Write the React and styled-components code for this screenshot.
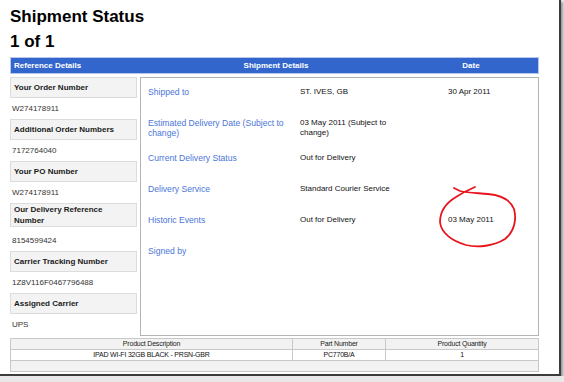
import React from 'react'
import styled, { createGlobalStyle } from 'styled-components'

const GlobalStyle = createGlobalStyle`
  html, body {
    margin: 0;
    padding: 0;
    background: #e8e8e8;
  }
  body {
    font-family: "Liberation Sans", Arial, sans-serif;
  }
`

const references = [
  { label: 'Your Order Number', value: 'W274178911' },
  { label: 'Additional Order Numbers', value: '7172764040' },
  { label: 'Your PO Number', value: 'W274178911' },
  { label: 'Our Delivery Reference Number', value: '8154599424', tall: true },
  { label: 'Carrier Tracking Number', value: '1Z8V116F0467796488' },
  { label: 'Assigned Carrier', value: 'UPS' },
]

const details = [
  { label: 'Shipped to', value: 'ST. IVES, GB', date: '30 Apr 2011' },
  { label: 'Estimated Delivery Date (Subject to change)', value: '03 May 2011 (Subject to change)', tall: true },
  { label: 'Current Delivery Status', value: 'Out for Delivery' },
  { label: 'Delivery Service', value: 'Standard Courier Service' },
  { label: 'Historic Events', value: 'Out for Delivery', date: '03 May 2011' },
  { label: 'Signed by' },
]

const App = () => {
  return (
    <>
      <GlobalStyle />
      <Page>
        <Title>Shipment Status</Title>
        <Title>1 of 1</Title>
        <HeaderBar>
          <HeadCell>Reference Details</HeadCell>
          <HeadCell center>Shipment Details</HeadCell>
          <HeadCell center last>Date</HeadCell>
        </HeaderBar>
        <Body>
          <RefColumn>
            {references.map(r => (
              <RefItem key={r.label}>
                <RefLabel tall={r.tall}>{r.label}</RefLabel>
                <RefValue tall={r.tall}>{r.value}</RefValue>
              </RefItem>
            ))}
          </RefColumn>
          <DetailPanel>
            {details.map(d => (
              <DetailRow key={d.label} tall={d.tall}>
                <DetailLabel>{d.label}</DetailLabel>
                <DetailValue>{d.value}</DetailValue>
                <DetailDate>{d.date}</DetailDate>
              </DetailRow>
            ))}
          </DetailPanel>
        </Body>
        <Products>
          <thead>
            <tr>
              <Th style={{ width: 281 }}>Product Description</Th>
              <Th style={{ width: 92 }}>Part Number</Th>
              <Th>Product Quantity</Th>
            </tr>
          </thead>
          <tbody>
            <tr>
              <Td>IPAD WI-FI 32GB BLACK - PRSN-GBR</Td>
              <Td>PC770B/A</Td>
              <Td>1</Td>
            </tr>
            <tr>
              <Td grey colSpan={3}></Td>
            </tr>
          </tbody>
        </Products>
        <Scribble viewBox="0 0 564 382" width="564" height="382">
          <path
            d="M475 187 C468 190 462 193 456 197 C446 203 440 212 440 222 C441 233 452 241 466 245 C478 248 494 246 505 239 C514 232 517 220 514 209 C510 199 500 195 488 194 C478 193 468 193 460 191 C458 190 456 189 454 188"
            fill="none"
            stroke="#e8141c"
            strokeWidth="1.8"
            strokeLinecap="round"
            strokeLinejoin="round"
          />
        </Scribble>
      </Page>
    </>
  )
}

export default App

const Page = styled.div`
  position: relative;
  box-sizing: border-box;
  width: 561px;
  height: 376px;
  padding: 4px 20px 0 10px;
  background: #fff;
  border-right: 2px solid #3c3c3c;
  border-bottom: 2px solid #3c3c3c;
  box-shadow: 2px 2px 2px #9a9a9a;
  overflow: hidden;
`

const Title = styled.h1`
  margin: 0;
  font-size: 17px;
  line-height: 24px;
  font-weight: bold;
  color: #000;
  padding-top: 1px;
`

const HeaderBar = styled.div`
  display: grid;
  grid-template-columns: 130px 270px 1fr;
  margin-top: 3px;
  height: 17px;
  align-items: center;
  background: #3366cc;
  border: 1px solid #b9c8e8;
  box-sizing: border-box;
`

const HeadCell = styled.div`
  color: #fff;
  font-size: 8px;
  font-weight: bold;
  padding-left: ${p => (p.center ? 0 : 3)}px;
  text-align: ${p => (p.center ? 'center' : 'left')};
  padding-right: ${p => (p.last ? 7 : 0)}px;
`

const Body = styled.div`
  display: grid;
  grid-template-columns: 127px 1fr;
  gap: 3px;
  margin-top: 3px;
`

const RefColumn = styled.div`
  display: flex;
  flex-direction: column;
`

const RefItem = styled.div`
  display: flex;
  flex-direction: column;
`

const RefLabel = styled.div`
  box-sizing: border-box;
  min-height: 21px;
  padding: 0 3px;
  display: flex;
  align-items: center;
  background: #f3f3f3;
  border: 1px solid #dcdcdc;
  font-size: 8px;
  font-weight: bold;
  line-height: 11px;
  color: #1a1a1a;
`

const RefValue = styled.div`
  height: 21px;
  line-height: 21px;
  margin-top: ${p => (p.tall ? 3 : 0)}px;
  padding-left: 2px;
  font-size: 8px;
  color: #333;
`

const DetailPanel = styled.div`
  box-sizing: border-box;
  height: 259px;
  border: 1px solid #b4b4b4;
  padding: 9px 0 0 7px;
`

const DetailRow = styled.div`
  display: grid;
  grid-template-columns: 152px 148px 1fr;
  height: ${p => (p.tall ? 35 : 31)}px;
  align-items: start;
`

const DetailLabel = styled.div`
  font-size: 8.6px;
  line-height: 10px;
  color: #4a76d8;
  padding-right: 4px;
`

const DetailValue = styled.div`
  font-size: 8px;
  line-height: 10px;
  color: #111;
  padding-right: 46px;
`

const DetailDate = styled.div`
  font-size: 8px;
  line-height: 10px;
  color: #111;
  white-space: nowrap;
`

const Products = styled.table`
  margin-top: 2px;
  width: 529px;
  border-collapse: collapse;
  border: 1px solid #b4b4b4;
`

const Th = styled.th`
  height: 10px;
  padding: 0;
  font-size: 7px;
  letter-spacing: -0.2px;
  line-height: 10px;
  font-weight: normal;
  color: #222;
  background: #f2f2f2;
  border: 1px solid #c8c8c8;
`

const Td = styled.td`
  height: 10px;
  padding: 0;
  font-size: 7px;
  letter-spacing: -0.2px;
  line-height: 10px;
  text-align: center;
  color: #111;
  background: ${p => (p.grey ? '#f2f2f2' : '#fff')};
  border: 1px solid #c8c8c8;
`

const Scribble = styled.svg`
  position: absolute;
  left: 0;
  top: 0;
  pointer-events: none;
`
